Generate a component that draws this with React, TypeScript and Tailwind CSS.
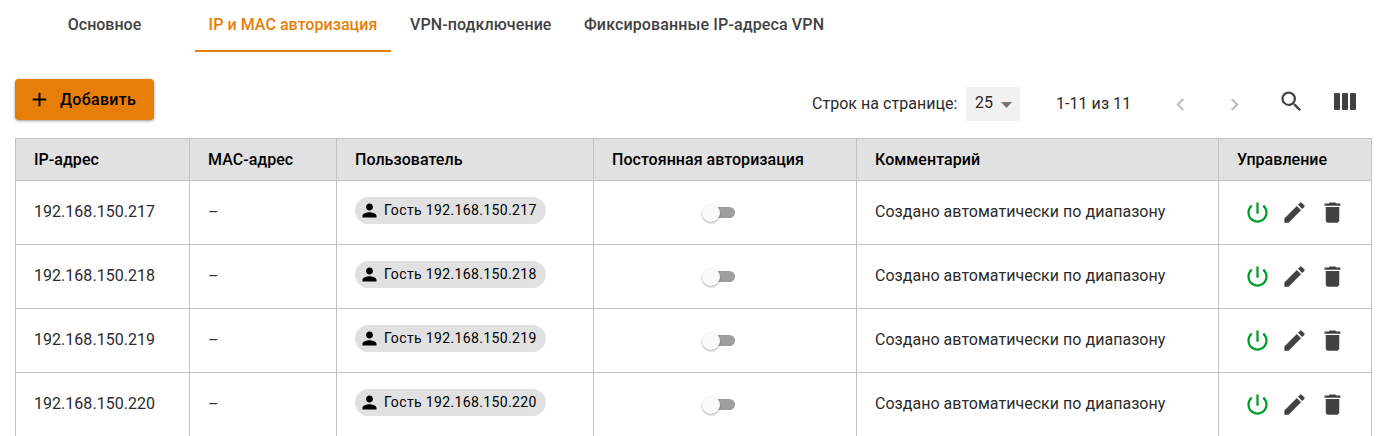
import React from 'react';

const PATHS = {
  power:
    'M13 3h-2v10h2V3zm4.83 2.17l-1.42 1.42C17.99 7.86 19 9.81 19 12c0 3.87-3.13 7-7 7s-7-3.13-7-7c0-2.19 1.01-4.14 2.58-5.42L6.17 5.17C4.23 6.82 3 9.26 3 12c0 4.97 4.03 9 9 9s9-4.03 9-9c0-2.74-1.23-5.18-3.17-6.83z',
  edit: 'M3 17.25V21h3.75L17.81 9.94l-3.75-3.75L3 17.25zM20.71 7.04a.996.996 0 0 0 0-1.41l-2.34-2.34a.996.996 0 0 0-1.41 0l-1.83 1.83 3.75 3.75 1.83-1.83z',
  trash: 'M6 19c0 1.1.9 2 2 2h8c1.1 0 2-.9 2-2V7H6v12zM19 4h-3.5l-1-1h-5l-1 1H5v2h14V4z',
  search:
    'M15.5 14h-.79l-.28-.27A6.471 6.471 0 0 0 16 9.5 6.5 6.5 0 1 0 9.5 16c1.61 0 3.09-.59 4.23-1.57l.27.28v.79l5 4.99L20.49 19l-4.99-5zm-6 0C7.01 14 5 11.99 5 9.5S7.01 5 9.5 5 14 7.01 14 9.5 11.99 14 9.5 14z',
  left: 'M15.41 7.41L14 6l-6 6 6 6 1.41-1.41L10.83 12z',
  right: 'M10 6L8.59 7.41 13.17 12l-4.58 4.59L10 18l6-6z',
  plus: 'M19 13h-6v6h-2v-6H5v-2h6V5h2v6h6v2z',
  person:
    'M12 12c2.21 0 4-1.79 4-4s-1.79-4-4-4-4 1.79-4 4 1.79 4 4 4zm0 2c-2.67 0-8 1.34-8 4v2h16v-2c0-2.66-5.33-4-8-4z',
};

function Icon({ name, className }: { name: keyof typeof PATHS; className: string }) {
  return (
    <svg viewBox="0 0 24 24" fill="currentColor" className={`shrink-0 ${className}`} aria-hidden="true">
      <path d={PATHS[name]} />
    </svg>
  );
}

const COLUMNS = ['IP-адрес', 'MAC-адрес', 'Пользователь', 'Постоянная авторизация', 'Комментарий', 'Управление'];
const ADDRESSES = ['192.168.150.217', '192.168.150.218', '192.168.150.219', '192.168.150.220'];
const GRID = 'grid grid-cols-[174px_147px_257px_263px_362px_153px]';
const FRAME = 'flex items-center border-r border-b border-[#c2c2c2]';
const CELL = `${FRAME} pl-[18px]`;
const TEXT_CELL = `${CELL} pb-[2px] tracking-[0.03px]`;

function Tabs() {
  return (
    <nav className="flex h-[52px] text-base font-medium text-[#424242]">
      <button className="ml-[14px] flex h-[52px] w-[181px] justify-center pt-[13px] leading-6">Основное</button>
      <button className="flex h-[52px] w-[196px] justify-center border-b-2 border-[#e67e08] pt-[13px] leading-6 tracking-[0.05px] text-[#e67e08]">
        IP и MAC авторизация
      </button>
      <button className="ml-[19px] flex w-[142px] pt-[13px] leading-6 tracking-[0.1px] whitespace-nowrap">
        VPN-подключение
      </button>
      <button className="ml-[32px] flex pt-[13px] leading-6 tracking-[0.13px]">Фиксированные IP-адреса VPN</button>
    </nav>
  );
}

function Toolbar() {
  return (
    <div className="flex h-[86px] items-start pt-[27px] pl-[15px]">
      <button className="flex h-[41px] w-[139px] items-center rounded bg-[#e67e08] pl-[13px] text-base font-medium tracking-[0.32px] text-black shadow-[0_1px_3px_rgba(0,0,0,0.4)]">
        <Icon name="plus" className="mr-[9px] size-[23px]" />
        Добавить
      </button>
      <div className="mt-2 ml-[658px] flex h-[34px] items-center text-[#2b2b2b]">
        <span className="w-[154px] tracking-[0.03px]">Строк на странице:</span>
        <div className="flex h-[34px] w-[54px] items-center bg-[#f1f1f1] pl-[9px]">
          <span className="-mt-0.5 w-[26px]">25</span>
          <svg viewBox="0 0 11 6" className="mt-[2px] h-[6px] w-[11px] fill-[#757575]">
            <path d="M0 0h11L5.5 6z" />
          </svg>
        </div>
        <span className="ml-9 w-[112px] tracking-[0.05px]">1-11 из 11</span>
        <Icon name="left" className="mt-px size-[25px] text-[#bdbdbd]" />
        <Icon name="right" className="mt-px ml-[29px] size-[25px] text-[#bdbdbd]" />
        <Icon name="search" className="-mt-[5px] ml-[31px] size-[27px] text-[#424242]" />
        <svg viewBox="0 0 22 17" className="-mt-[5px] ml-[29px] h-[17px] w-[22px] fill-[#424242]">
          <rect width="6" height="17" rx="1" />
          <rect x="8" width="6" height="17" rx="1" />
          <rect x="16" width="6" height="17" rx="1" />
        </svg>
      </div>
    </div>
  );
}

function Row({ ip }: { ip: string }) {
  return (
    <div className={`${GRID} h-16 text-[#2b2b2b]`}>
      <div className={TEXT_CELL}>{ip}</div>
      <div className={CELL}>–</div>
      <div className={CELL}>
        <div className="-mt-[5px] flex h-[27px] w-[191px] items-center rounded-full bg-[#e1e1e1] pl-[4px] text-sm tracking-[0.36px] text-black">
          <Icon name="person" className="mr-[4px] size-[21px]" />
          Гость {ip}
        </div>
      </div>
      <div className={`${FRAME} pl-[108px]`}>
        <div className="flex h-[11px] w-[33px] items-center">
          <div className="size-[18px] shrink-0 rounded-full bg-[#fafafa] shadow-[0_1px_2px_rgba(0,0,0,0.35)]" />
          <div className="-z-10 -ml-2 h-[11px] w-[23px] rounded-r-full bg-[#9e9e9e]" />
        </div>
      </div>
      <div className={TEXT_CELL}>Создано автоматически по диапазону</div>
      <div className={`${FRAME} pl-[25px] text-[#424242]`}>
        <Icon name="power" className="size-[27px] text-[#039b2a]" />
        <Icon name="edit" className="ml-[10px] size-[27px]" />
        <Icon name="trash" className="ml-[11px] size-[27px]" />
      </div>
    </div>
  );
}

export default function App() {
  return (
    <main className="isolate h-[436px] w-[1384px] overflow-hidden bg-white font-['Roboto','Liberation_Sans',sans-serif] text-base leading-6">
      <Tabs />
      <Toolbar />
      <section className="ml-[15px] w-[1357px] border-t border-l border-[#c2c2c2]">
        <div className={`${GRID} h-[42px] bg-[#e1e1e1] font-medium tracking-[0.04px] text-black`}>
          {COLUMNS.map((title) => (
            <div key={title} className={CELL}>
              {title}
            </div>
          ))}
        </div>
        {ADDRESSES.map((ip) => (
          <Row key={ip} ip={ip} />
        ))}
      </section>
    </main>
  );
}
